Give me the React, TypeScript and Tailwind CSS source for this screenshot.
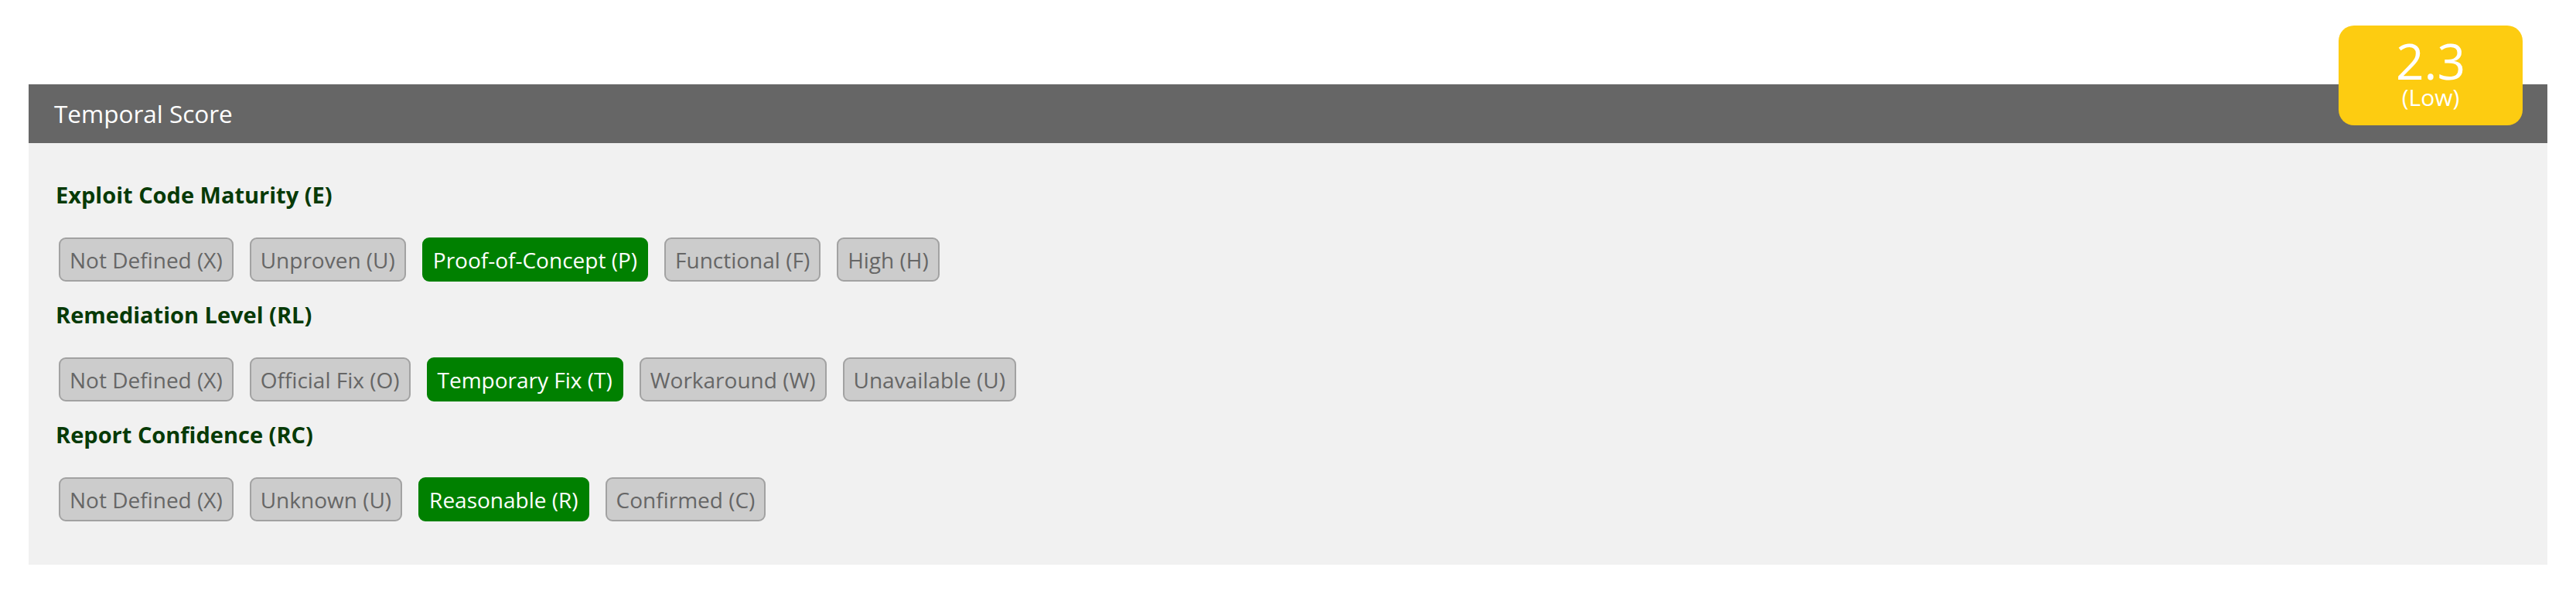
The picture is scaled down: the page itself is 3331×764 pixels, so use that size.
import React from "react";

type Metric = {
  title: string;
  options: string[];
  selected: number;
};

const metrics: Metric[] = [
  {
    title: "Exploit Code Maturity (E)",
    options: ["Not Defined (X)", "Unproven (U)", "Proof-of-Concept (P)", "Functional (F)", "High (H)"],
    selected: 2,
  },
  {
    title: "Remediation Level (RL)",
    options: ["Not Defined (X)", "Official Fix (O)", "Temporary Fix (T)", "Workaround (W)", "Unavailable (U)"],
    selected: 2,
  },
  {
    title: "Report Confidence (RC)",
    options: ["Not Defined (X)", "Unknown (U)", "Reasonable (R)", "Confirmed (C)"],
    selected: 2,
  },
];

function MetricGroup({ metric }: { metric: Metric }) {
  return (
    <div>
      <h3 className="mt-[24px] mb-[36px] text-[29px] leading-[38px] font-bold text-[#073a07]">
        {metric.title}
      </h3>
      <div className="flex gap-[21px] ml-[4px]">
        {metric.options.map((opt, i) => (
          <button
            key={opt}
            className={
              i === metric.selected
                ? "h-[57px] px-[12px] flex items-center rounded-[9px] border-2 border-[#008000] bg-[#008000] text-white text-[28px] leading-none"
                : "h-[57px] px-[12px] flex items-center rounded-[9px] border-2 border-[#a2a2a2] bg-[#cccccc] text-[#666666] text-[28px] leading-none"
            }
          >
            {opt}
          </button>
        ))}
      </div>
    </div>
  );
}

export default function App() {
  return (
    <div className="min-h-[764px] bg-white pt-[109px] px-[37px] font-['Open_Sans',sans-serif]">
      <div className="relative">
        <div className="h-[76px] bg-[#666666] flex items-center pl-[33px] text-white text-[31.5px]">
          Temporal Score
        </div>
        <div className="absolute -top-[76px] right-[32px] w-[238px] h-[129px] rounded-[20px] bg-[#fdcc11] text-white flex flex-col items-center pt-[16px]">
          <span className="text-[64px] leading-[60px]">2.3</span>
          <span className="mt-[2px] text-[30px] leading-[30px]">(Low)</span>
        </div>
        <div className="bg-[#f1f1f1] pl-[35px] pt-[24px] pb-[56px]">
          {metrics.map((m) => (
            <MetricGroup key={m.title} metric={m} />
          ))}
        </div>
      </div>
    </div>
  );
}
